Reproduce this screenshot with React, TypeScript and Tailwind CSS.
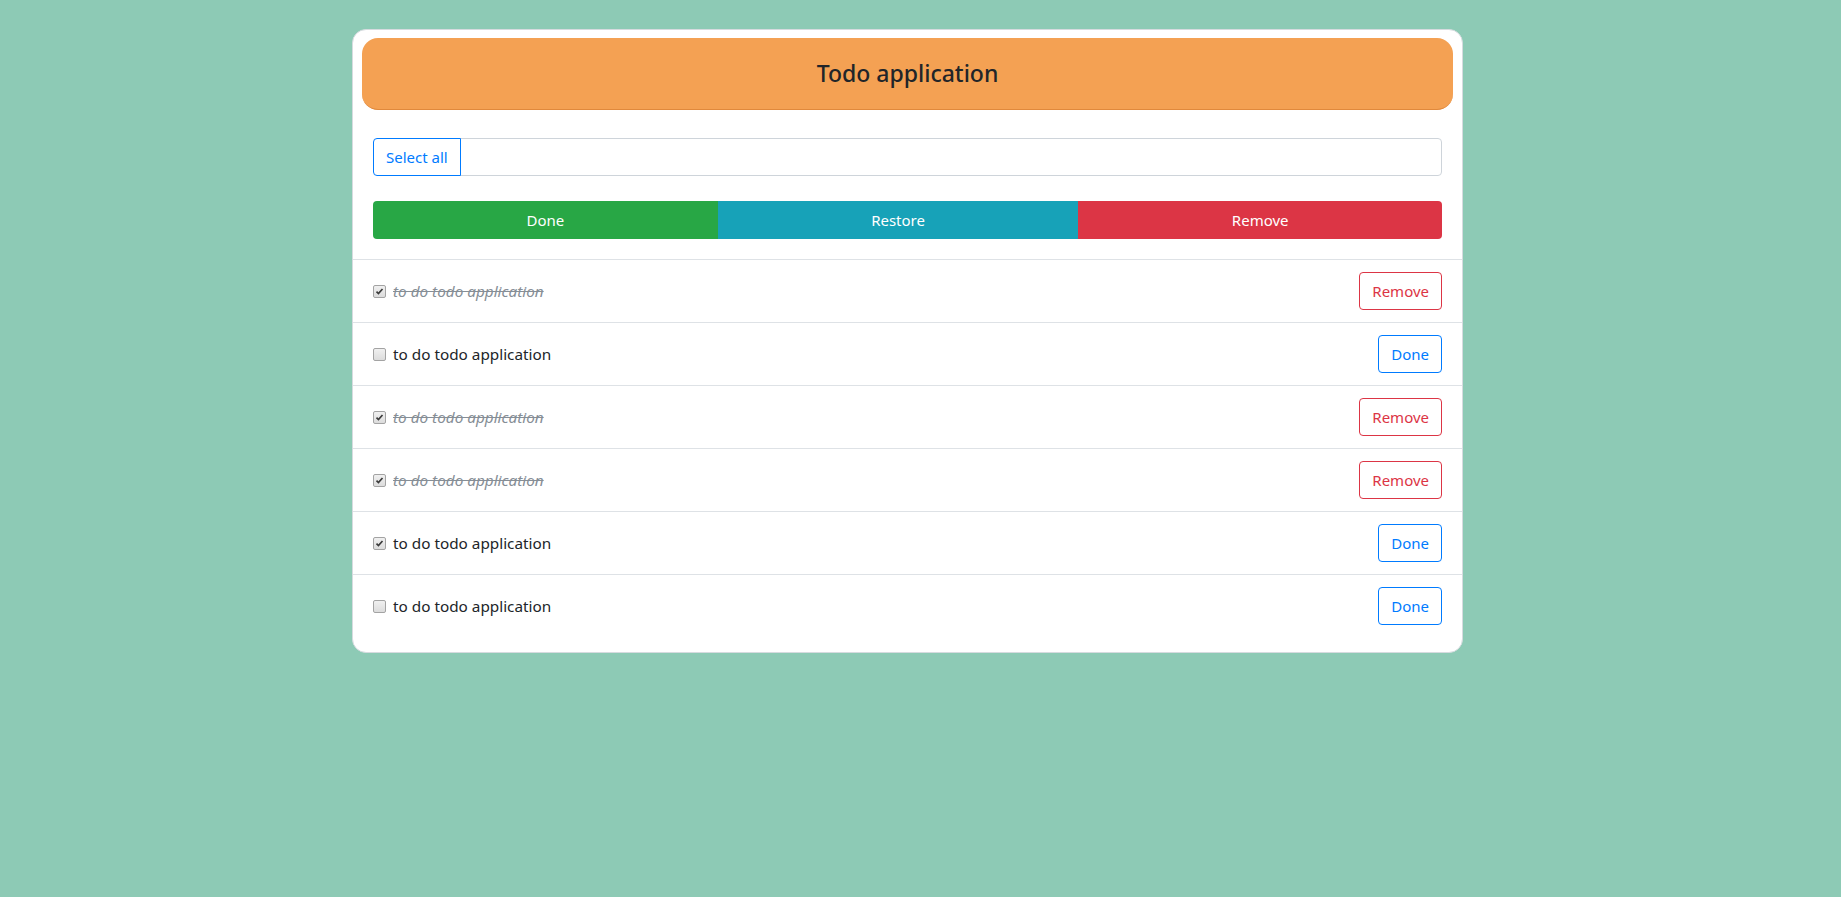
import { useState } from "react";

interface Todo {
  id: number;
  text: string;
  checked: boolean;
  done: boolean;
}

const initialTodos: Todo[] = [
  { id: 1, text: "to do todo application", checked: true, done: true },
  { id: 2, text: "to do todo application", checked: false, done: false },
  { id: 3, text: "to do todo application", checked: true, done: true },
  { id: 4, text: "to do todo application", checked: true, done: true },
  { id: 5, text: "to do todo application", checked: true, done: false },
  { id: 6, text: "to do todo application", checked: false, done: false },
];

function CheckBox({ checked, onToggle }: { checked: boolean; onToggle: () => void }) {
  return (
    <button
      type="button"
      onClick={onToggle}
      className="flex h-[13px] w-[13px] shrink-0 items-center justify-center rounded-[2px] border border-[#a3a3a3] bg-gradient-to-b from-[#f0f0f0] to-[#dcdcdc]"
      aria-pressed={checked}
    >
      {checked && (
        <svg viewBox="0 0 12 12" className="h-[9px] w-[9px]">
          <path d="M2 6.2 L4.6 8.8 L10 2.6" fill="none" stroke="#3a3a3a" strokeWidth="2.2" />
        </svg>
      )}
    </button>
  );
}

export default function App() {
  const [todos, setTodos] = useState<Todo[]>(initialTodos);

  const toggle = (id: number) =>
    setTodos((ts) => ts.map((t) => (t.id === id ? { ...t, checked: !t.checked } : t)));

  return (
    <div
      className="min-h-screen bg-[#8dcab5] pl-[352px] pt-[29px] text-[#212529]"
      style={{ fontFamily: '"Noto Sans", "Open Sans", sans-serif' }}
    >
      <div className="w-[1111px] overflow-hidden rounded-[14px] border border-[#d6dbdf] bg-white pb-[15px]">
        {/* Header */}
        <div className="px-[9px] pt-[8px]">
          <div className="flex h-[72px] items-center justify-center rounded-[16px] border-b border-[#e0893c] bg-[#f4a153]">
            <h3 className="text-[23px] font-medium leading-none">Todo application</h3>
          </div>
        </div>

        {/* Controls */}
        <div className="px-5 pb-5 pt-7">
          <div className="flex h-[38px]">
            <button
              type="button"
              onClick={() => setTodos((ts) => ts.map((t) => ({ ...t, checked: true })))}
              className="z-10 rounded-l-[4px] border border-[#007bff] px-3 text-[15px] text-[#007bff]"
            >
              Select all
            </button>
            <input
              className="-ml-px flex-1 rounded-r-[4px] border border-[#ced4da] px-3 text-[15px] outline-none"
              type="text"
            />
          </div>
          <div className="mt-[25px] flex h-[38px] overflow-hidden rounded-[4px] text-[15px] text-white">
            <button type="button" className="flex-auto bg-[#28a745] px-3">
              Done
            </button>
            <button type="button" className="flex-auto bg-[#17a2b8] px-3">
              Restore
            </button>
            <button type="button" className="flex-auto bg-[#dc3545] px-3">
              Remove
            </button>
          </div>
        </div>

        {/* List */}
        <ul>
          {todos.map((t) => (
            <li key={t.id} className="flex items-center border-t border-[#dee2e6] px-5 py-3">
              <CheckBox checked={t.checked} onToggle={() => toggle(t.id)} />
              <span
                className={
                  t.done
                    ? "ml-[7px] flex-1 text-[15.3px] italic text-[#868e96] line-through"
                    : "ml-[7px] flex-1 text-[15.3px]"
                }
              >
                {t.text}
              </span>
              {t.done ? (
                <button
                  type="button"
                  className="h-[38px] rounded-[4px] border border-[#dc3545] px-3 text-[15px] text-[#dc3545]"
                >
                  Remove
                </button>
              ) : (
                <button
                  type="button"
                  onClick={() => setTodos((ts) => ts.map((x) => (x.id === t.id ? { ...x, done: true } : x)))}
                  className="h-[38px] rounded-[4px] border border-[#007bff] px-3 text-[15px] text-[#007bff]"
                >
                  Done
                </button>
              )}
            </li>
          ))}
        </ul>
      </div>
    </div>
  );
}
